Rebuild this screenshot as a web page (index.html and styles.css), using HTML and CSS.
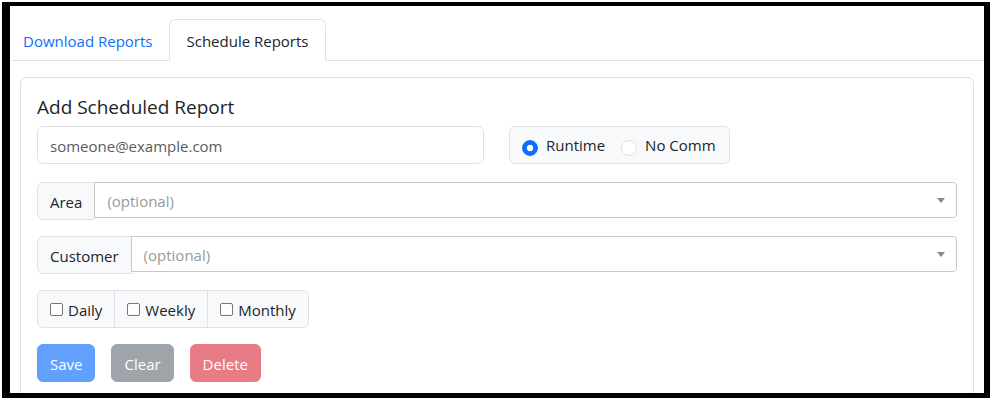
FILE: index.html
```html
<!DOCTYPE html>
<html lang="en">
<head>
  <meta charset="UTF-8" />
  <meta name="viewport" content="width=device-width, initial-scale=1.0"/>
  <title>Reports</title>
  <link rel="stylesheet" href="styles.css">
</head>
<body>
  <div class="frame">
    <ul class="nav-tabs">
      <li><a class="tab-link first" href="#">Download Reports</a></li>
      <li><a class="tab-link active" href="#">Schedule Reports</a></li>
    </ul>

    <div class="card">
      <div class="card-body">
        <h5 class="card-title">Add Scheduled Report</h5>

        <div class="top-row">
          <input class="email-input" type="email" placeholder="someone@example.com" />
          <div class="radio-box">
            <label class="radio-option"><input type="radio" name="kind" checked /> Runtime</label>
            <label class="radio-option"><input type="radio" name="kind" /> No Comm</label>
          </div>
        </div>

        <div class="input-group">
          <span class="group-label">Area</span>
          <div class="select-box">
            <span class="select-placeholder">(optional)</span>
            <b class="select-arrow"></b>
          </div>
        </div>

        <div class="input-group">
          <span class="group-label">Customer</span>
          <div class="select-box">
            <span class="select-placeholder">(optional)</span>
            <b class="select-arrow"></b>
          </div>
        </div>

        <div class="check-group">
          <label class="check-item"><input type="checkbox" /> Daily</label>
          <label class="check-item"><input type="checkbox" /> Weekly</label>
          <label class="check-item"><input type="checkbox" /> Monthly</label>
        </div>

        <div class="actions">
          <button class="btn btn-primary" disabled>Save</button>
          <button class="btn btn-secondary" disabled>Clear</button>
          <button class="btn btn-danger" disabled>Delete</button>
        </div>
      </div>
    </div>
  </div>
</body>
</html>
```

FILE: styles.css
```css
* {
  box-sizing: border-box;
}

body {
  margin: 0;
  background-color: #ffffff;
  color: #212529;
  font-family: "Segoe UI", "Open Sans", "Liberation Sans", Arial, sans-serif;
  font-size: 15px;
  line-height: 24px;
}

.frame {
  margin: 2px 0 0 2px;
  width: 988px;
  height: 396px;
  border-style: solid;
  border-color: #000;
  border-width: 4px 6px 5px 8px;
  overflow: hidden;
}

.nav-tabs {
  display: flex;
  list-style: none;
  margin: 13px 0 0 2px;
  padding: 0;
  border-bottom: 1px solid #dee2e6;
}

.tab-link {
  display: block;
  padding: 9px 16px 7px;
  margin-bottom: -1px;
  border: 1px solid transparent;
  border-radius: 6px 6px 0 0;
  color: #0d6efd;
  text-decoration: none;
}

.tab-link.first {
  padding-left: 10px;
}

.tab-link.active {
  color: #212529;
  background-color: #fff;
  border-color: #dee2e6 #dee2e6 #fff;
}

.card {
  margin: 16px 10px 0;
  border: 1px solid #dfdfdf;
  border-radius: 6px;
}

.card-body {
  padding: 16px;
}

.card-title {
  margin: 1px 0 7px;
  font-size: 19px;
  font-weight: 400;
  line-height: 24px;
}

.top-row {
  display: flex;
  align-items: flex-start;
  gap: 25px;
  margin-bottom: 18px;
}

.email-input {
  width: 447px;
  height: 38px;
  padding: 7px 12px 5px;
  border: 1px solid #dee2e6;
  border-radius: 6px;
  font: inherit;
  color: #212529;
}

.email-input::placeholder {
  color: #595c5f;
}

.radio-box {
  display: flex;
  align-items: center;
  height: 38px;
  padding: 0 13px 0 12px;
  border: 1px solid #dee2e6;
  border-radius: 6px;
  background-color: #f8f9fa;
}

.radio-option {
  display: flex;
  align-items: center;
  gap: 8px;
  margin-right: 16px;
}

.radio-option:last-child {
  margin-right: 0;
}

.radio-option input {
  appearance: none;
  width: 16px;
  height: 16px;
  margin: 5px 0 0;
  border: 1px solid #dee2e6;
  border-radius: 50%;
  background-color: #fff;
}

.radio-option input:checked {
  border-color: #0d6efd;
  background: radial-gradient(circle, #fff 0 3px, #0d6efd 3.6px);
}

.input-group {
  display: flex;
  align-items: flex-start;
  margin-bottom: 16px;
}

.group-label {
  display: flex;
  align-items: center;
  height: 38px;
  padding: 1px 12px 0;
  border: 1px solid #dee2e6;
  border-radius: 6px 0 0 6px;
  background-color: #f8f9fa;
}

.select-box {
  flex: 1;
  display: flex;
  align-items: center;
  justify-content: space-between;
  height: 36px;
  margin-left: -1px;
  padding: 1px 11px 0 12px;
  border: 1px solid #c8c8c8;
  border-radius: 0 4px 4px 0;
  background-color: #fff;
}

.select-placeholder {
  color: #999;
}

.select-arrow {
  width: 0;
  height: 0;
  border-style: solid;
  border-width: 5px 4px 0;
  border-color: #888 transparent transparent;
}

.check-group {
  display: flex;
  width: fit-content;
  height: 38px;
  margin-bottom: 16px;
  border: 1px solid #dee2e6;
  border-radius: 6px;
  background-color: #f8f9fa;
}

.check-item {
  display: flex;
  align-items: center;
  padding: 1px 12px 0;
}

.check-item + .check-item {
  border-left: 1px solid #dee2e6;
}

.check-item input {
  appearance: none;
  width: 13px;
  height: 13px;
  margin: 0 5px 1px 0;
  border: 1px solid #767676;
  border-radius: 2px;
  background-color: #fff;
}

.actions {
  display: flex;
  gap: 16px;
}

.btn {
  padding: 7px 12px 5px;
  border: 1px solid transparent;
  border-radius: 6px;
  font: inherit;
  color: #fff;
  opacity: 0.65;
}

.btn-primary {
  background-color: #0d6efd;
  border-color: #0d6efd;
}

.btn-secondary {
  background-color: #6c757d;
  border-color: #6c757d;
}

.btn-danger {
  background-color: #dc3545;
  border-color: #dc3545;
}
```
